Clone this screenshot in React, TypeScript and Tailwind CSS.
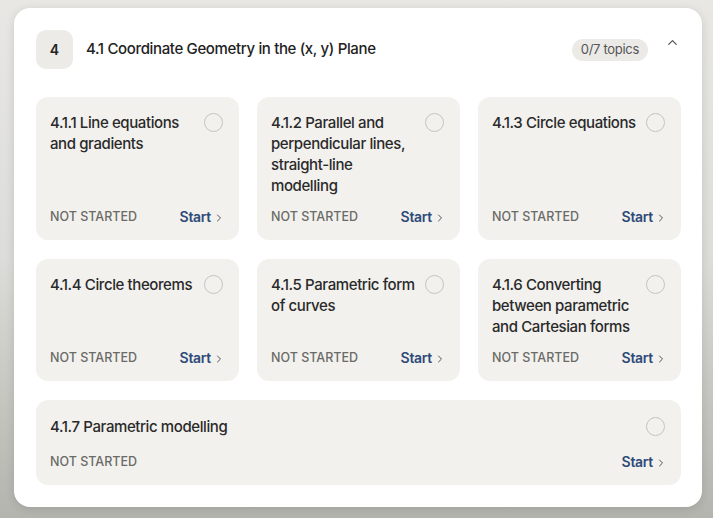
import { ChevronUp, ChevronRight } from "lucide-react";

type Topic = { code: string; title: string };

const TOPICS: Topic[] = [
  { code: "4.1.1", title: "Line equations and gradients" },
  { code: "4.1.2", title: "Parallel and perpendicular lines, straight-line modelling" },
  { code: "4.1.3", title: "Circle equations" },
  { code: "4.1.4", title: "Circle theorems" },
  { code: "4.1.5", title: "Parametric form of curves" },
  { code: "4.1.6", title: "Converting between parametric and Cartesian forms" },
];

const LAST: Topic = { code: "4.1.7", title: "Parametric modelling" };

function Ring() {
  return <span className="block w-[19px] h-[19px] shrink-0 rounded-full border-[1.5px] border-[#c4c4c0]" />;
}

function StartLink() {
  return (
    <span className="inline-flex items-center gap-[2px] -mr-[2px] text-[14px] leading-[18px] font-semibold text-[#2d4a78] tracking-[-0.3px]">
      Start <ChevronRight size={12} strokeWidth={2} className="text-[#555] mt-[1px]" />
    </span>
  );
}

function Status() {
  return <span className="text-[12.5px] leading-[18px] font-medium text-[#6a6a66]">NOT STARTED</span>;
}

function TopicCard({ t }: { t: Topic }) {
  return (
    <div className="flex flex-col rounded-[12px] bg-[#f2f1ee] pl-[14px] pr-[16px] pt-[15px] pb-[14px]">
      <div className="flex items-start justify-between gap-[8px]">
        <div className="text-[15px] leading-[21px] font-medium text-[#2a2a2a] tracking-[-0.4px]">
          {t.code} {t.title}
        </div>
        <div className="pt-[1px]">
          <Ring />
        </div>
      </div>
      <div className="mt-auto pt-[10px] flex items-center justify-between">
        <Status />
        <StartLink />
      </div>
    </div>
  );
}

export default function App() {
  return (
    <div
      className="w-[713px] h-[518px] overflow-hidden bg-gradient-to-b from-[#e8e7e3] via-[#dcdcd8] to-[#b4b4ae] pt-[8px] pl-[14px]"
      style={{ fontFamily: "Inter, 'Noto Sans', sans-serif" }}
    >
      <div className="w-[688px] h-[499px] rounded-[16px] bg-white shadow-[0_2px_10px_rgba(0,0,0,0.12)] px-[21px] pt-[22px]">
        {/* Header */}
        <div className="flex items-center h-[39px] pl-[1px]">
          <div className="w-[37px] h-[39px] rounded-[10px] bg-[#ecebe8] flex items-center justify-center text-[14px] font-semibold text-[#222]">
            4
          </div>
          <h2 className="ml-[13px] text-[15px] font-medium text-[#222] tracking-[-0.35px]">
            4.1 Coordinate Geometry in the (x, y) Plane
          </h2>
          <span className="ml-auto rounded-full bg-[#ebeae7] px-[9px] h-[22px] flex items-center text-[13px] text-[#555] tracking-[-0.3px]">
            0/7 topics
          </span>
          <ChevronUp size={15} strokeWidth={2} className="ml-[17px] mr-[1px] -mt-[14px] text-[#555]" />
        </div>

        {/* Topics */}
        <div className="mt-[28px] flex flex-col gap-[19px] pl-[1px]">
          <div className="grid grid-cols-3 gap-[18px] h-[143px]">
            {TOPICS.slice(0, 3).map((t) => (
              <TopicCard key={t.code} t={t} />
            ))}
          </div>
          <div className="grid grid-cols-3 gap-[18px] h-[122px]">
            {TOPICS.slice(3).map((t) => (
              <TopicCard key={t.code} t={t} />
            ))}
          </div>
          <div className="h-[85px] rounded-[12px] bg-[#f2f1ee] pl-[14px] pr-[16px] pt-[16px] pb-[14px] flex justify-between">
            <div className="flex flex-col justify-between">
              <div className="text-[15px] leading-[21px] font-medium text-[#2a2a2a] tracking-[-0.4px]">
                {LAST.code} {LAST.title}
              </div>
              <Status />
            </div>
            <div className="flex flex-col items-end justify-between">
              <div className="pt-[1px]">
                <Ring />
              </div>
              <StartLink />
            </div>
          </div>
        </div>
      </div>
    </div>
  );
}
